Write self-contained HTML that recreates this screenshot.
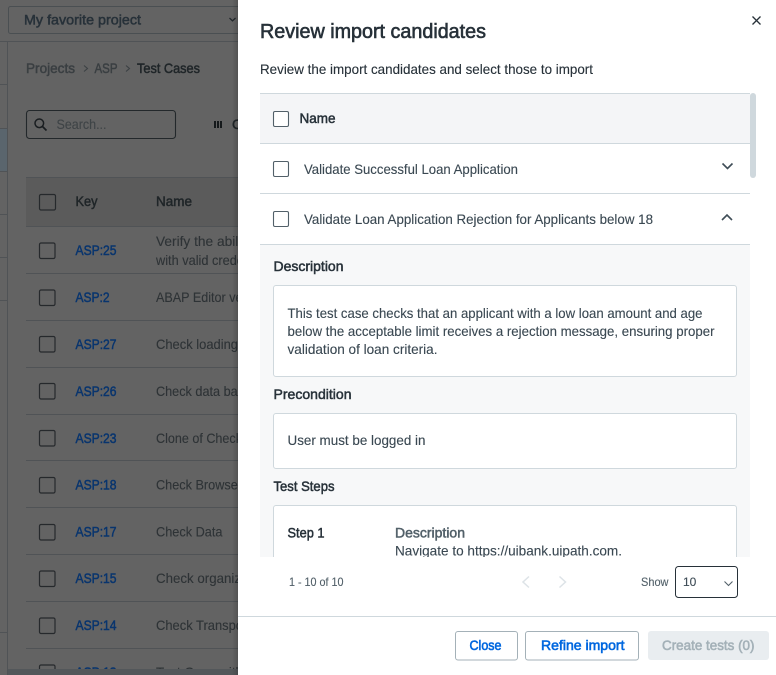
<!DOCTYPE html>
<html><head><meta charset="utf-8"><style>
html,body{margin:0;padding:0;width:776px;height:675px;overflow:hidden;background:#636363}
svg{display:block}
text{font-family:"Liberation Sans",sans-serif;font-size:14px;white-space:pre;stroke:currentColor;stroke-width:.12px}
text.sb{stroke-width:.5px}
.d{fill:#1f2528;color:#1f2528}
.g{fill:#2e3336;color:#2e3336}
.k{fill:#09356e;color:#09356e;font-size:13.5px}
.m{fill:#273139;color:#273139}
.b{fill:#3a4852;color:#3a4852}
.l{stroke:#cfd8dd;stroke-width:1;fill:none}
.bg{stroke:#505356;stroke-width:1;fill:none}
.cb{fill:none;stroke:#26292c;stroke-width:1.2}
</style></head><body>
<svg width="776" height="675" viewBox="0 0 776 675" xmlns="http://www.w3.org/2000/svg">
<defs>
<linearGradient id="sh" x1="0" x2="1"><stop offset="0" stop-color="#000" stop-opacity="0"/><stop offset="1" stop-color="#000" stop-opacity=".16"/></linearGradient>
<clipPath id="c"><rect x="260" y="245" width="490" height="312"/></clipPath>
</defs>
<rect width="238" height="675" fill="#636363"/>
<path class="bg" d="M0 41.500H238M7.500 41V675"/>
<rect x="0" y="128" width="7" height="43" fill="#5a656d"/>
<path class="bg" d="M0 84.500H7M0 128.500H7M0 171.500H7M0 214.500H7M0 257.500H7M0 300.500H7M0 632.500H7"/>
<rect x="8.500" y="6.500" width="240" height="27" rx="2" fill="none" stroke="#4a4f52"/>
<text class="m sb" x="24" y="24.500" textLength="117" lengthAdjust="spacingAndGlyphs">My favorite project</text>
<path d="M229.500 18l3 2.800 3-2.800" fill="none" stroke="#22282c" stroke-width="1.300"/>
<text class="sb" x="26" y="73" style="fill:#3a3f42;color:#3a3f42" textLength="49" lengthAdjust="spacingAndGlyphs">Projects</text>
<path d="M84 65.500l3.500 3-3.500 3" fill="none" stroke="#3c4144" stroke-width="1.100"/>
<text class="sb" x="94.500" y="73" style="fill:#3a3f42;color:#3a3f42" textLength="23" lengthAdjust="spacingAndGlyphs">ASP</text>
<path d="M126 65.500l3.500 3-3.500 3" fill="none" stroke="#3c4144" stroke-width="1.100"/>
<text class="d sb" x="137" y="73" textLength="63" lengthAdjust="spacingAndGlyphs">Test Cases</text>
<rect x="26.500" y="110.500" width="149" height="28" rx="3" fill="none" stroke="#23282b" stroke-width="1.100"/>
<circle cx="39.300" cy="123.300" r="4.300" fill="none" stroke="#191d20" stroke-width="1.500"/>
<path d="M42.500 126.500l4 4" stroke="#191d20" stroke-width="1.700"/>
<text x="56.500" y="129" style="fill:#3f4447;color:#3f4447" textLength="50" lengthAdjust="spacingAndGlyphs">Search...</text>
<path d="M214 121h2v7h-2zM217 121h2v7h-2zM220 121h2v7h-2z" fill="#15191b"/>
<text class="d sb" x="232" y="129">C</text>
<rect x="26" y="177" width="212" height="49" fill="#5b5b5b"/>
<path class="bg" d="M26 177.500H238M26 226.500H238M26 273.500H238M26 320.500H238M26 367.500H238M26 414.500H238M26 460.500H238M26 507.500H238M26 554.500H238M26 601.500H238M26 648.500H238"/>
<g class="cb">
<rect x="39.500" y="194.500" width="16" height="15.500" rx="1.500"/>
<rect x="39.500" y="243" width="15.500" height="15.500" rx="1.500"/>
<rect x="39.500" y="290" width="15.500" height="15.500" rx="1.500"/>
<rect x="39.500" y="336.500" width="15.500" height="15.500" rx="1.500"/>
<rect x="39.500" y="383.500" width="15.500" height="15.500" rx="1.500"/>
<rect x="39.500" y="430.500" width="15.500" height="15.500" rx="1.500"/>
<rect x="39.500" y="477.500" width="15.500" height="15.500" rx="1.500"/>
<rect x="39.500" y="524.500" width="15.500" height="15.500" rx="1.500"/>
<rect x="39.500" y="571" width="15.500" height="15.500" rx="1.500"/>
<rect x="39.500" y="618" width="15.500" height="15.500" rx="1.500"/>
<rect x="39.500" y="665" width="15.500" height="15.500" rx="1.500"/>
</g>
<text class="d sb" x="75.500" y="206" textLength="22" lengthAdjust="spacingAndGlyphs">Key</text>
<text class="d sb" x="156" y="206" textLength="36" lengthAdjust="spacingAndGlyphs">Name</text>
<g>
<text class="k sb" x="75.500" y="255" textLength="41" lengthAdjust="spacingAndGlyphs">ASP:25</text>
<text class="k sb" x="75.500" y="302" textLength="34" lengthAdjust="spacingAndGlyphs">ASP:2</text>
<text class="k sb" x="75.500" y="349" textLength="41" lengthAdjust="spacingAndGlyphs">ASP:27</text>
<text class="k sb" x="75.500" y="396" textLength="41" lengthAdjust="spacingAndGlyphs">ASP:26</text>
<text class="k sb" x="75.500" y="443" textLength="41" lengthAdjust="spacingAndGlyphs">ASP:23</text>
<text class="k sb" x="75.500" y="489.500" textLength="41" lengthAdjust="spacingAndGlyphs">ASP:18</text>
<text class="k sb" x="75.500" y="536.500" textLength="41" lengthAdjust="spacingAndGlyphs">ASP:17</text>
<text class="k sb" x="75.500" y="583" textLength="41" lengthAdjust="spacingAndGlyphs">ASP:15</text>
<text class="k sb" x="75.500" y="630" textLength="41" lengthAdjust="spacingAndGlyphs">ASP:14</text>
<text class="k sb" x="75.500" y="677" textLength="41" lengthAdjust="spacingAndGlyphs">ASP:13</text>
</g>
<g>
<text class="g" x="156" y="246" textLength="96" lengthAdjust="spacingAndGlyphs">Verify the ability</text>
<text class="g" x="156" y="265" textLength="95" lengthAdjust="spacingAndGlyphs">with valid creden</text>
<text class="g" x="156" y="302" textLength="97" lengthAdjust="spacingAndGlyphs">ABAP Editor verif</text>
<text class="g" x="156" y="349" textLength="82" lengthAdjust="spacingAndGlyphs">Check loading</text>
<text class="g" x="156" y="396" textLength="88" lengthAdjust="spacingAndGlyphs">Check data bas</text>
<text class="g" x="156" y="443" textLength="86" lengthAdjust="spacingAndGlyphs">Clone of Check</text>
<text class="g" x="156" y="489.500" textLength="86" lengthAdjust="spacingAndGlyphs">Check Browser</text>
<text class="g" x="156" y="536.500" textLength="66.500" lengthAdjust="spacingAndGlyphs">Check Data</text>
<text class="g" x="156" y="583" textLength="85" lengthAdjust="spacingAndGlyphs">Check organiz</text>
<text class="g" x="156" y="630" textLength="87" lengthAdjust="spacingAndGlyphs">Check Transpo</text>
<text class="g" x="156" y="677" textLength="87" lengthAdjust="spacingAndGlyphs">Test Case with</text>
</g>
<rect x="8" y="669" width="230" height="6" fill="#53575a"/>
<rect x="232" y="0" width="6" height="675" fill="url(#sh)"/>

<rect x="238" y="0" width="538" height="675" fill="#fff"/>
<path d="M752.500 16.500l8 8M760.500 16.500l-8 8" stroke="#273139" stroke-width="1.300"/>
<text class="m sb" x="260" y="38" style="font-size:20px;stroke-width:.6px" textLength="226" lengthAdjust="spacingAndGlyphs">Review import candidates</text>
<text class="m" x="260" y="74" textLength="333" lengthAdjust="spacingAndGlyphs">Review the import candidates and select those to import</text>

<rect x="260" y="94" width="490" height="49" fill="#f4f5f7"/>
<rect x="260" y="245" width="490" height="312" fill="#f7f8f9"/>
<path class="l" d="M260 93.500H750M260 143.500H750M260 193.500H750M260 244.500H750"/>
<rect x="750" y="93" width="6" height="85" rx="3" fill="#cfd8dd"/>
<g fill="#fff" stroke="#526069" stroke-width="1.100">
<rect x="273.500" y="111.500" width="15" height="15" rx="1.500"/>
<rect x="273.500" y="161.500" width="15" height="15" rx="1.500"/>
<rect x="273.500" y="211.500" width="15" height="15" rx="1.500"/>
</g>
<text class="m sb" x="299.500" y="123" textLength="36" lengthAdjust="spacingAndGlyphs">Name</text>
<text class="b" x="304" y="174" textLength="214" lengthAdjust="spacingAndGlyphs">Validate Successful Loan Application</text>
<text class="b" x="304" y="224" textLength="349" lengthAdjust="spacingAndGlyphs">Validate Loan Application Rejection for Applicants below 18</text>
<path d="M722.500 163.500l5 5 5-5M722 220l5-5 5 5" fill="none" stroke="#3f4d57" stroke-width="1.600"/>

<g clip-path="url(#c)">
<text class="m sb" x="273.500" y="271" textLength="70" lengthAdjust="spacingAndGlyphs">Description</text>
<rect x="273.500" y="285.500" width="463" height="91" rx="2.500" fill="#fff" stroke="#cfd8dd"/>
<text class="b" x="287.500" y="318" textLength="415" lengthAdjust="spacingAndGlyphs">This test case checks that an applicant with a low loan amount and age</text>
<text class="b" x="287.500" y="336" textLength="427" lengthAdjust="spacingAndGlyphs">below the acceptable limit receives a rejection message, ensuring proper</text>
<text class="b" x="287.500" y="354" textLength="150" lengthAdjust="spacingAndGlyphs">validation of loan criteria.</text>
<text class="m sb" x="273.500" y="399" textLength="78" lengthAdjust="spacingAndGlyphs">Precondition</text>
<rect x="273.500" y="413.500" width="463" height="55" rx="2.500" fill="#fff" stroke="#cfd8dd"/>
<text class="b" x="287.500" y="445" textLength="138" lengthAdjust="spacingAndGlyphs">User must be logged in</text>
<text class="m sb" x="273.500" y="491" textLength="61" lengthAdjust="spacingAndGlyphs">Test Steps</text>
<rect x="273.500" y="505.500" width="463" height="90" rx="2.500" fill="#fff" stroke="#cfd8dd"/>
<text class="m sb" x="287.500" y="537.500" textLength="37" lengthAdjust="spacingAndGlyphs">Step 1</text>
<text class="sb" x="395" y="537.500" style="fill:#526069;color:#526069" textLength="70" lengthAdjust="spacingAndGlyphs">Description</text>
<text class="b" x="395" y="555.500" textLength="227" lengthAdjust="spacingAndGlyphs">Navigate to https://uibank.uipath.com.</text>
</g>

<text x="289" y="586" style="fill:#526069;color:#526069;font-size:12px" textLength="54.500" lengthAdjust="spacingAndGlyphs">1 - 10 of 10</text>
<path d="M529 576.500l-6 5.500 6 5.500M559.500 576.500l6 5.500-6 5.500" fill="none" stroke="#dde3e7" stroke-width="1.500"/>
<text x="641" y="586" style="fill:#526069;color:#526069;font-size:12px" textLength="27.500" lengthAdjust="spacingAndGlyphs">Show</text>
<rect x="675.500" y="566.500" width="62" height="31" rx="3" fill="#fff" stroke="#273139"/>
<text x="683" y="586" style="fill:#3f4d57;color:#3f4d57;font-size:12px">10</text>
<path d="M724.500 581.500l4 4 4-4" fill="none" stroke="#526069" stroke-width="1.100"/>

<path class="l" d="M238 616.500H776"/>
<rect x="455.500" y="631.500" width="62" height="28.500" rx="2.500" fill="#fff" stroke="#a4b1b8"/>
<text class="sb" x="469.500" y="650" style="fill:#0067df;color:#0067df;stroke-width:.6px" textLength="32" lengthAdjust="spacingAndGlyphs">Close</text>
<rect x="525.500" y="631.500" width="113" height="28.500" rx="2.500" fill="#fff" stroke="#a4b1b8"/>
<text class="sb" x="541" y="650" style="fill:#0067df;color:#0067df;stroke-width:.6px" textLength="83.500" lengthAdjust="spacingAndGlyphs">Refine import</text>
<rect x="648" y="631" width="121" height="29" rx="3" fill="#e9edf0"/>
<text class="sb" x="662" y="650" style="fill:#a4b1b8;color:#a4b1b8;stroke-width:.6px" textLength="92.500" lengthAdjust="spacingAndGlyphs">Create tests (0)</text>
</svg>
</body></html>
